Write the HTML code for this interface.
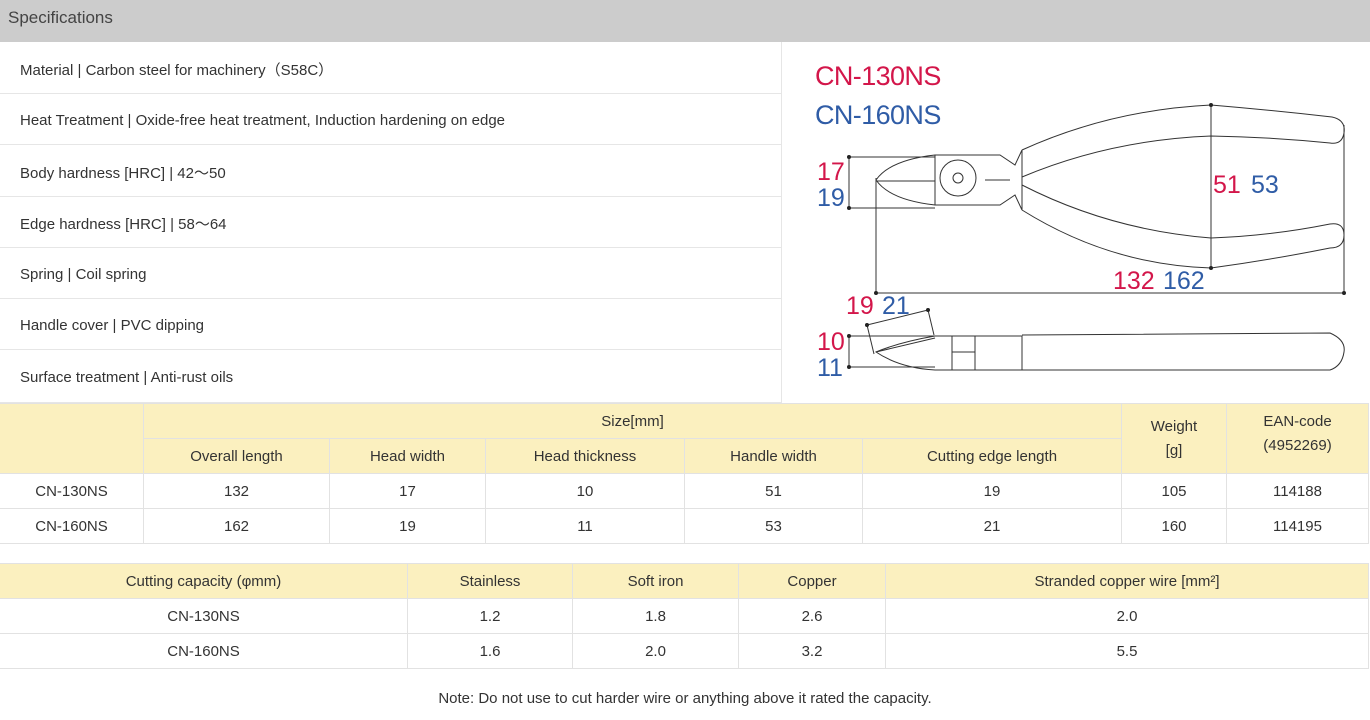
<!DOCTYPE html>
<html><head><meta charset="utf-8"><style>
*{margin:0;padding:0;box-sizing:border-box}
body{width:1370px;height:720px;background:#fff;font-family:"Liberation Sans",sans-serif;color:#333;position:relative;overflow:hidden;font-size:15px}
.hdr{position:absolute;left:0;top:0;width:1370px;height:42px;background:#cccccc;font-size:17px;padding:8px 0 0 8px;color:#444}
.spec{position:absolute;left:0;top:42px;width:782px;height:361px;border-right:1px solid #e6e6e6;border-bottom:1px solid #e6e6e6}
.spec div{display:flex;align-items:center;border-bottom:1px solid #e6e6e6;padding:3px 0 0 20px;font-size:15px}
.spec div:last-child{border-bottom:none}
table{position:absolute;border-collapse:collapse;font-size:15px;text-align:center}
td{border:1px solid #e2e2e2;height:35px;padding:0;vertical-align:middle}
.y td,td.y{background:#fbf0bf}
.note{position:absolute;left:0;width:1370px;top:690px;text-align:center;font-size:15px}
</style></head><body>
<div class="hdr">Specifications</div>
<div class="spec">
<div style="height:52px">Material | Carbon steel for machinery（S58C）</div>
<div style="height:51px">Heat Treatment | Oxide-free heat treatment, Induction hardening on edge</div>
<div style="height:52px">Body hardness [HRC] | 42～50</div>
<div style="height:51px">Edge hardness [HRC] | 58～64</div>
<div style="height:51px">Spring | Coil spring</div>
<div style="height:51px">Handle cover | PVC dipping</div>
<div style="height:52px">Surface treatment | Anti-rust oils</div>
</div>
<svg style="position:absolute;left:0;top:0" width="1370" height="403">
<g font-family="Liberation Sans, sans-serif" font-size="27" letter-spacing="-0.6">
<text x="815" y="85" fill="#d3164a">CN-130NS</text>
<text x="815" y="124" fill="#2f5ca6">CN-160NS</text>
</g>
<g fill="none" stroke="#333" stroke-width="1">
<line x1="849" y1="157" x2="935" y2="157"/><line x1="849" y1="208" x2="935" y2="208"/><line x1="849" y1="157" x2="849" y2="208"/>
<line x1="876" y1="178" x2="876" y2="293"/><line x1="876" y1="293" x2="1344" y2="293"/><line x1="1344" y1="125" x2="1344" y2="293"/>
<line x1="1211" y1="105" x2="1211" y2="268"/>
<line x1="849" y1="336" x2="935" y2="336"/><line x1="849" y1="367" x2="935" y2="367"/><line x1="849" y1="336" x2="849" y2="367"/>
<line x1="867" y1="325" x2="928" y2="310"/><line x1="867" y1="325" x2="874" y2="354"/><line x1="928" y1="310" x2="934" y2="335"/>
<path d="M876 180 Q890 160 935 155 L935 205 Q890 200 876 180 Z"/>
<line x1="876" y1="181" x2="935" y2="181"/>
<path d="M935 155 L1000 155 L1015 165 L1022 150 L1022 210 L1015 195 L1000 205 L935 205"/>
<circle cx="958" cy="178" r="18"/><circle cx="958" cy="178" r="5"/>
<line x1="985" y1="180" x2="1010" y2="180"/>
<path d="M1022 150 Q1110 110 1211 105 Q1270 110 1332 117 Q1346 120 1344 133 Q1342 145 1330 143 Q1270 137 1211 136 Q1110 140 1022 177"/>
<path d="M1022 185 Q1110 230 1211 238 Q1270 236 1330 224 Q1344 222 1344 235 Q1344 248 1330 248 Q1270 260 1211 268 Q1110 265 1022 210"/>
<path d="M876 352 Q900 342 935 336 L1022 336 L1022 370 L935 370 Q900 368 876 352 Z"/>
<line x1="876" y1="352" x2="935" y2="338"/>
<line x1="952" y1="336" x2="952" y2="370"/><line x1="975" y1="336" x2="975" y2="370"/><line x1="952" y1="352" x2="975" y2="352"/>
<path d="M1022 335 L1330 333 Q1346 340 1344 352 Q1342 366 1330 370 L1022 370"/>
</g>
<g fill="#222">
<circle cx="849" cy="157" r="2"/><circle cx="849" cy="208" r="2"/><circle cx="876" cy="293" r="2"/><circle cx="1344" cy="293" r="2"/>
<circle cx="1211" cy="105" r="2"/><circle cx="1211" cy="268" r="2"/><circle cx="849" cy="336" r="2"/><circle cx="849" cy="367" r="2"/>
<circle cx="867" cy="325" r="2"/><circle cx="928" cy="310" r="2"/>
</g>
<g font-family="Liberation Sans, sans-serif" font-size="25">
<text x="817" y="180" fill="#d3164a">17</text><text x="817" y="206" fill="#2f5ca6">19</text>
<text x="1213" y="193" fill="#d3164a">51</text><text x="1251" y="193" fill="#2f5ca6">53</text>
<text x="1113" y="289" fill="#d3164a">132</text><text x="1163" y="289" fill="#2f5ca6">162</text>
<text x="846" y="314" fill="#d3164a">19</text><text x="882" y="314" fill="#2f5ca6">21</text>
<text x="817" y="350" fill="#d3164a">10</text><text x="817" y="376" fill="#2f5ca6">11</text>
</g>
</svg>
<table style="left:-1px;top:403px;width:1370px">
<colgroup><col style="width:144px"><col style="width:186px"><col style="width:156px"><col style="width:199px"><col style="width:178px"><col style="width:259px"><col style="width:105px"><col></colgroup>
<tr class="y"><td rowspan="2"></td><td colspan="5">Size[mm]</td><td rowspan="2" style="line-height:24px">Weight<br>[g]</td><td rowspan="2" style="line-height:24px;vertical-align:top;padding-top:6px">EAN-code<br>(4952269)</td></tr>
<tr class="y"><td>Overall length</td><td>Head width</td><td>Head thickness</td><td>Handle width</td><td>Cutting edge length</td></tr>
<tr><td>CN-130NS</td><td>132</td><td>17</td><td>10</td><td>51</td><td>19</td><td>105</td><td>114188</td></tr>
<tr><td>CN-160NS</td><td>162</td><td>19</td><td>11</td><td>53</td><td>21</td><td>160</td><td>114195</td></tr>
</table>
<table style="left:-1px;top:563px;width:1370px">
<colgroup><col style="width:408px"><col style="width:165px"><col style="width:166px"><col style="width:147px"><col></colgroup>
<tr class="y"><td>Cutting capacity (φmm)</td><td>Stainless</td><td>Soft iron</td><td>Copper</td><td>Stranded copper wire [mm²]</td></tr>
<tr><td>CN-130NS</td><td>1.2</td><td>1.8</td><td>2.6</td><td>2.0</td></tr>
<tr><td>CN-160NS</td><td>1.6</td><td>2.0</td><td>3.2</td><td>5.5</td></tr>
</table>
<div class="note">Note: Do not use to cut harder wire or anything above it rated the capacity.</div>
</body></html>
